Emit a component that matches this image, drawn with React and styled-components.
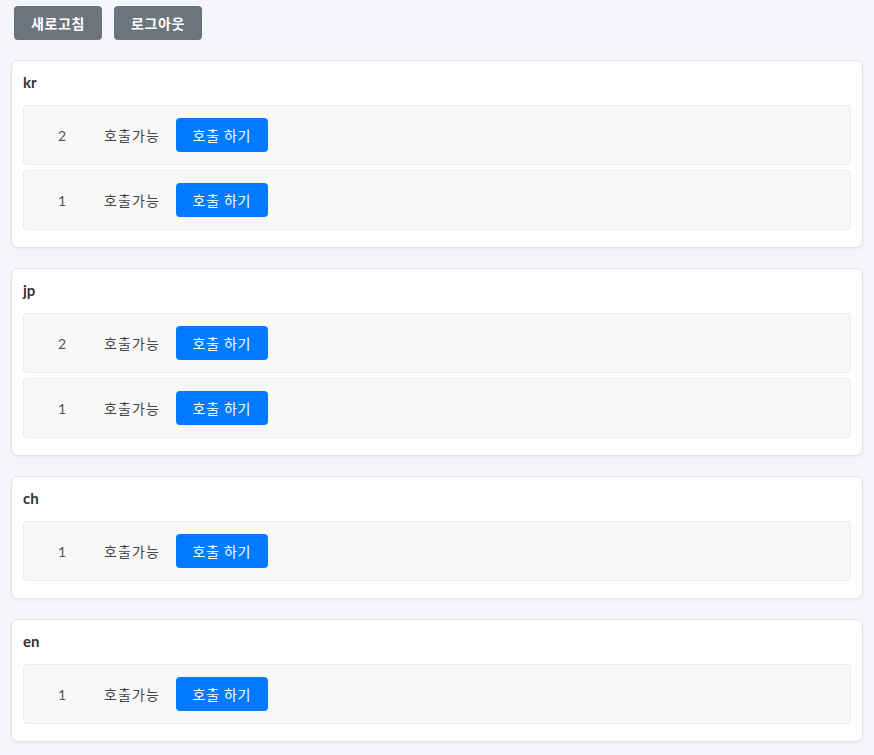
import React from 'react';
import styled, { createGlobalStyle } from 'styled-components';

const data = [
  { lang: 'kr', items: [2, 1] },
  { lang: 'jp', items: [2, 1] },
  { lang: 'ch', items: [1] },
  { lang: 'en', items: [1] },
];

export default function App() {
  return (
    <Page>
      <Global />
      <Toolbar>
        <TopButton>새로고침</TopButton>
        <TopButton>로그아웃</TopButton>
      </Toolbar>
      <CardList>
        {data.map((group) => (
          <Card key={group.lang}>
            <CardTitle>{group.lang}</CardTitle>
            <Rows>
              {group.items.map((n) => (
                <Row key={n}>
                  <Num>{n}</Num>
                  <Status>호출가능</Status>
                  <CallButton>호출 하기</CallButton>
                </Row>
              ))}
            </Rows>
          </Card>
        ))}
      </CardList>
    </Page>
  );
}

const Global = createGlobalStyle`
  html, body {
    margin: 0;
    padding: 0;
    background: #f5f6fa;
  }
  body {
    font-family: Lato, "Noto Sans CJK KR", sans-serif;
  }
`;

const Page = styled.div`
  padding: 6px 11px 12px;
`;

const Toolbar = styled.div`
  display: flex;
  gap: 12px;
  padding-left: 3px;
  margin-bottom: 20px;
`;

const TopButton = styled.button`
  height: 34px;
  width: 88px;
  padding: 0;
  border: none;
  border-radius: 4px;
  background: #6c757d;
  color: #fff;
  font-family: "Noto Sans CJK KR", sans-serif;
  font-weight: 700;
  font-size: 14px;
  letter-spacing: 0.6px;
  cursor: pointer;
`;

const CardList = styled.div`
  display: flex;
  flex-direction: column;
  gap: 20px;
`;

const Card = styled.div`
  background: #fff;
  border: 1px solid #e1e3e8;
  border-radius: 7px;
  box-shadow: 0 1px 3px rgba(0, 0, 0, 0.06);
  padding: 11px 11px 17px;
`;

const CardTitle = styled.div`
  font-family: Lato, "Noto Sans CJK KR", sans-serif;
  font-weight: 700;
  font-size: 15px;
  line-height: 20px;
  color: #333;
  margin-bottom: 13px;
`;

const Rows = styled.div`
  display: flex;
  flex-direction: column;
  gap: 5px;
`;

const Row = styled.div`
  display: flex;
  align-items: center;
  height: 58px;
  background: #f8f8f8;
  border: 1px solid #ebebeb;
  border-radius: 4px;
  padding-left: 16px;
`;

const Num = styled.span`
  width: 44px;
  text-align: center;
  font-size: 14px;
  color: #555;
`;

const Status = styled.span`
  margin-left: 20px;
  font-family: "Noto Sans CJK KR", sans-serif;
  font-size: 14px;
  letter-spacing: 1.1px;
  color: #444;
`;

const CallButton = styled.button`
  margin-left: 16px;
  height: 34px;
  width: 92px;
  padding: 0;
  border: none;
  border-radius: 4px;
  background: #007bff;
  color: #fff;
  font-family: "Noto Sans CJK KR", sans-serif;
  font-size: 14px;
  letter-spacing: 0.8px;
  cursor: pointer;
`;
